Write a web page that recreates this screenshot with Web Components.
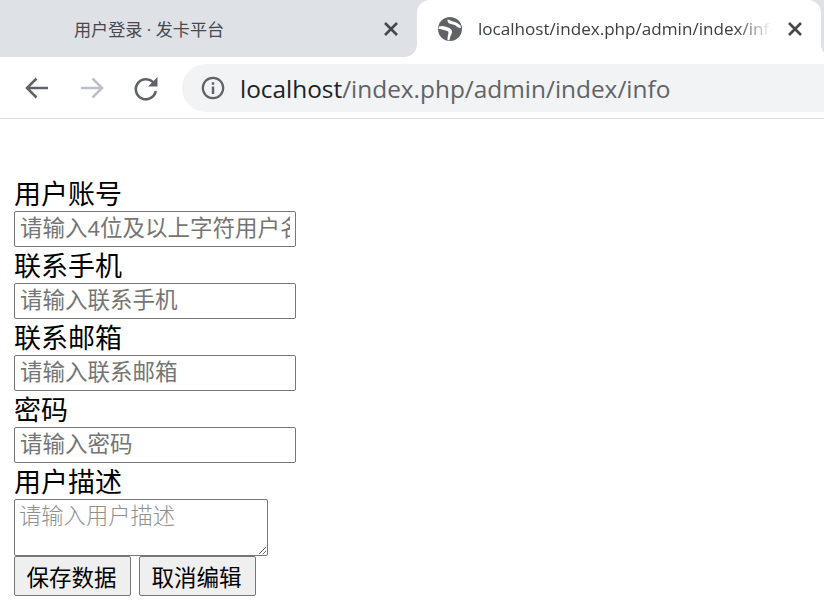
<!DOCTYPE html>
<html lang="zh-CN">
<head>
<meta charset="utf-8">
<title>用户信息</title>
<style>
    html, body {
        margin: 0;
        height: 608px;
        overflow: hidden;
        background: #fff;
    }
</style>
</head>
<body>
<browser-chrome>
    <browser-tab slot="tabs" label="用户登录 · 发卡平台"></browser-tab>
    <browser-tab slot="tabs" label="localhost/index.php/admin/index/info" active></browser-tab>
</browser-chrome>
<info-form>
    <form-field label="用户账号" placeholder="请输入4位及以上字符用户名"></form-field>
    <form-field label="联系手机" placeholder="请输入联系手机"></form-field>
    <form-field label="联系邮箱" placeholder="请输入联系邮箱"></form-field>
    <form-field label="密码" placeholder="请输入密码" type="password"></form-field>
    <form-field label="用户描述" placeholder="请输入用户描述" multiline></form-field>
</info-form>
<script>
const UI_FONT = `"Open Sans", "Noto Sans CJK SC", sans-serif`;
const CJK_FONT = `"Liberation Sans", "Noto Sans CJK SC", sans-serif`;

class BrowserTab extends HTMLElement {
    constructor() {
        super();
        this.attachShadow({ mode: "open" });
        const active = this.hasAttribute("active");
        this.shadowRoot.innerHTML = `
            <style>
                :host {
                    display: flex;
                    align-items: center;
                    box-sizing: border-box;
                    width: 412px;
                    height: 57px;
                    position: relative;
                    font: 17.100px ${UI_FONT};
                    color: #45494e;
                }
                :host([active]) {
                    width: 404px;
                    margin-left: 5px;
                    background: #fff;
                    border-radius: 13px 13px 0 0;
                    color: #3c4043;
                }
                :host([active])::before,
                :host([active])::after {
                    content: "";
                    position: absolute;
                    bottom: 0;
                    width: 12px;
                    height: 12px;
                }
                :host([active])::before {
                    left: -12px;
                    background: radial-gradient(circle at 0 0, transparent 11.500px, #fff 12px);
                }
                :host([active])::after {
                    right: -12px;
                    background: radial-gradient(circle at 100% 0, transparent 11.500px, #fff 12px);
                }
                .globe { width: 26px; height: 26px; margin-left: 20px; flex: none; }
                .title {
                    flex: 1;
                    min-width: 0;
                    margin-left: ${active ? "15px" : "74px"};
                    white-space: nowrap;
                    overflow: hidden;
                    ${active ? "-webkit-mask-image: linear-gradient(to right, #000 88%, transparent 100%);" : ""}
                }
                .close { width: 18px; height: 18px; flex: none; margin: 0 ${active ? "17px 0 14px" : "12px 0 0"}; }
            </style>
            ${active ? `<svg class="globe" viewBox="0 0 26 26">
                <circle cx="13" cy="13" r="12" fill="#5f6368"/>
                <path d="M2 10.500C5 9.500 8 10 11 11.500C13.500 12.500 15.500 14 15 16.500C14.500 18.500 13 20 12.500 24.500L10.500 24C10.500 21 11 19 11.500 17C11.800 15 9 14.500 7 14C5 13.500 3.500 13 1.500 13Z" fill="#fff"/>
                <path d="M10.500 3.500C12.500 3.800 14 5 16 5.500C18.500 6 21 7 23.500 9.500L24 12C21.500 12 20 11 18.500 9.500C16.500 8 13 8.500 11.500 7C10.500 6 10.500 4.800 10.500 3.500Z" fill="#fff"/>
            </svg>` : ""}
            <span class="title">${this.getAttribute("label")}</span>
            <svg class="close" viewBox="0 0 18 18"><path d="M3 3l12 12M15 3L3 15" stroke="#44474b" stroke-width="2.600" fill="none"/></svg>
        `;
    }
}

class BrowserChrome extends HTMLElement {
    constructor() {
        super();
        this.attachShadow({ mode: "open" });
        this.shadowRoot.innerHTML = `
            <style>
                :host { display: block; }
                .strip {
                    display: flex;
                    height: 57px;
                    background: #dee1e6;
                    overflow: hidden;
                }
                .toolbar {
                    display: flex;
                    align-items: center;
                    box-sizing: border-box;
                    height: 62px;
                    padding: 7px 0 6px 24px;
                    gap: 26px;
                    border-bottom: 1px solid #dadce0;
                    background: #fff;
                }
                .nav { width: 28px; height: 28px; flex: none; }
                .omnibox {
                    flex: 1;
                    display: flex;
                    align-items: center;
                    height: 48px;
                    margin-left: -4px;
                    border-radius: 24px 0 0 24px;
                    background: #f1f3f4;
                    font: 24.400px ${UI_FONT};
                    color: #5f6368;
                    white-space: nowrap;
                    overflow: hidden;
                }
                .info { width: 24px; height: 24px; margin: 0 15px 0 19px; flex: none; }
                b { font-weight: 400; color: #202124; }
            </style>
            <div class="strip"><slot name="tabs"></slot></div>
            <div class="toolbar">
                <svg class="nav" viewBox="0 0 28 28"><path d="M24 14H3M12.500 4.500L3 14l9.500 9.500" stroke="#5f6368" stroke-width="2.500" fill="none"/></svg>
                <svg class="nav" viewBox="0 0 28 28"><path d="M3 14h21M14.500 4.500L24 14l-9.500 9.500" stroke="#bdc1c6" stroke-width="2.500" fill="none"/></svg>
                <svg class="nav" viewBox="0 0 28 28"><path d="M22 9.500A10 10 0 1 0 23.700 17" stroke="#5f6368" stroke-width="2.600" fill="none"/><path d="M25.500 3V12.500H16z" fill="#5f6368"/></svg>
                <div class="omnibox">
                    <svg class="info" viewBox="0 0 24 24"><circle cx="12" cy="12" r="10.200" stroke="#5f6368" stroke-width="2.200" fill="none"/><path d="M10.800 10.500h2.400V18h-2.400zM10.800 6.300h2.400v2.400h-2.400z" fill="#5f6368"/></svg>
                    <span><b>localhost</b>/index.php/admin/index/info</span>
                </div>
            </div>
        `;
    }
}

class FormField extends HTMLElement {
    constructor() {
        super();
        this.attachShadow({ mode: "open" });
        const placeholder = this.getAttribute("placeholder");
        const control = this.hasAttribute("multiline")
            ? `<textarea placeholder="${placeholder}"></textarea>`
            : `<input type="${this.getAttribute("type") || "text"}" placeholder="${placeholder}">`;
        this.shadowRoot.innerHTML = `
            <style>
                :host { display: block; font: 27px/36px ${CJK_FONT}; color: #000; }
                label { display: block; box-sizing: border-box; height: 36px; padding-top: 5px; line-height: 31px; }
                input, textarea {
                    display: block;
                    box-sizing: border-box;
                    margin: 0;
                    border: 1px solid #767676;
                    border-radius: 2px;
                    padding: 0 5px;
                    background: #fff;
                    font: 22.500px ${CJK_FONT};
                }
                input { width: 282px; height: 36px; }
                textarea { width: 254px; height: 57px; padding: 2px 4px; font-size: 22.300px; line-height: 30px; }
                ::placeholder { color: #757575; opacity: 1; }
                textarea::placeholder { color: #8f8f8f; font-weight: 300; }
            </style>
            <label>${this.getAttribute("label")}</label>
            ${control}
        `;
    }
}

class InfoForm extends HTMLElement {
    constructor() {
        super();
        this.attachShadow({ mode: "open" });
        this.shadowRoot.innerHTML = `
            <style>
                :host { display: block; padding: 56px 0 0 14px; }
                .actions { display: flex; gap: 8px; }
                button {
                    box-sizing: border-box;
                    width: 117px;
                    height: 40px;
                    margin: 0;
                    padding: 0 2px 0 0;
                    border: 1px solid #767676;
                    border-radius: 2px;
                    background: #efefef;
                    color: #000;
                    font: 22.500px ${CJK_FONT};
                }
            </style>
            <slot></slot>
            <div class="actions">
                <button type="button">保存数据</button>
                <button type="button">取消编辑</button>
            </div>
        `;
    }
}

customElements.define("browser-tab", BrowserTab);
customElements.define("browser-chrome", BrowserChrome);
customElements.define("form-field", FormField);
customElements.define("info-form", InfoForm);
</script>
</body>
</html>
